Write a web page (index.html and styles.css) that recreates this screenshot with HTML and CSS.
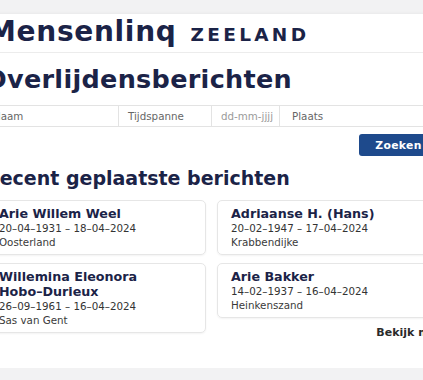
FILE: index.html
```html
<!DOCTYPE html>
<html>
	<head>
		<title>Mensenlinq Zeeland - Overlijdensberichten</title>
		<link rel="stylesheet" href="styles.css">
	</head>
	<body>
		<div class="page">
			<div class="header">
				<span class="logo">Mensenlinq</span>
				<span class="region">ZEELAND</span>
			</div>

			<h1>Overlijdensberichten</h1>

			<div class="searchRow">
				<div class="field nameField">Naam</div>
				<div class="field periodField">Tijdspanne</div>
				<div class="field dateField">dd-mm-jjjj</div>
				<div class="field placeField">Plaats</div>
			</div>
			<div class="buttonRow">
				<button class="searchButton">Zoeken</button>
			</div>

			<h2>Recent geplaatste berichten</h2>

			<div class="cards">
				<div class="column">
					<div class="card">
						<p class="name">Arie Willem Weel</p>
						<p class="dates">20–04–1931 – 18–04–2024</p>
						<p class="place">Oosterland</p>
					</div>
					<div class="card">
						<p class="name">Willemina Eleonora Hobo–Durieux</p>
						<p class="dates">26–09–1961 – 16–04–2024</p>
						<p class="place">Sas van Gent</p>
					</div>
				</div>
				<div class="column">
					<div class="card">
						<p class="name">Adriaanse H. (Hans)</p>
						<p class="dates">20–02–1947 – 17–04–2024</p>
						<p class="place">Krabbendijke</p>
					</div>
					<div class="card">
						<p class="name">Arie Bakker</p>
						<p class="dates">14–02–1937 – 16–04–2024</p>
						<p class="place">Heinkenszand</p>
					</div>
					<div class="moreRow">
						<a class="more">Bekijk meer</a>
					</div>
				</div>
			</div>
		</div>
	</body>
</html>
```

FILE: styles.css
```css
body {
	margin: 0;
	background-color: #f2f2f3;
	font-family: "DejaVu Sans", Verdana, sans-serif;
	color: #1b2347;
	overflow: hidden;
}

.page {
	background-color: #ffffff;
	margin: 14px 0 0 -30px;
	width: 453px;
	padding: 0 15px 28px 15px;
	box-shadow: 0 0 4px rgba(0, 0, 0, 0.06);
}

.header {
	display: flex;
	align-items: baseline;
	gap: 14px;
	height: 38px;
	padding-left: 3px;
	border-bottom: 1px solid #ececec;
	margin-right: -40px;
}

.logo {
	font-size: 28px;
	font-weight: 700;
	line-height: 35px;
	letter-spacing: 0.7px;
}

.region {
	font-size: 18.5px;
	font-weight: 700;
	letter-spacing: 3.3px;
}

h1 {
	font-size: 25.5px;
	font-weight: 700;
	margin: 11px 0 0 0;
	line-height: 30px;
	letter-spacing: 0.3px;
}

.searchRow {
	display: flex;
	margin-top: 11px;
	margin-right: -40px;
	border: 1px solid #e3e3e3;
	height: 20px;
}

.field {
	font-size: 10.3px;
	color: #666666;
	line-height: 20px;
	padding-left: 9px;
	border-right: 1px solid #e3e3e3;
	box-sizing: border-box;
}

.nameField { width: 133px; padding-left: 7px; }
.periodField { width: 93px; }
.dateField { width: 68px; color: #9a9a9a; }
.placeField { flex: 1; border-right: none; padding-left: 12px; }

.buttonRow {
	display: flex;
	justify-content: flex-end;
	margin-top: 7px;
}

.searchButton {
	background-color: #1e4a8c;
	color: #ffffff;
	border: none;
	border-radius: 3px;
	font-family: "DejaVu Sans", Verdana, sans-serif;
	font-weight: 700;
	font-size: 10.8px;
	letter-spacing: 0.3px;
	height: 22px;
	width: 79px;
	padding: 0;
}

h2 {
	font-size: 19px;
	font-weight: 700;
	margin: 10px 0 0 0;
	line-height: 24px;
}

.cards {
	display: flex;
	gap: 11px;
	margin-top: 10px;
}

.column {
	flex: 1;
	display: flex;
	flex-direction: column;
	gap: 8px;
}

.card {
	border: 1px solid #e6e6e6;
	border-radius: 5px;
	padding: 5px 10px 5px 13px;
	box-shadow: 0 1px 2px rgba(0, 0, 0, 0.05);
}

.card p {
	margin: 0;
}

.name {
	font-size: 12.7px;
	font-weight: 700;
	line-height: 15px;
	width: 160px;
}

.dates {
	font-size: 10.3px;
	color: #333333;
	line-height: 14px;
}

.place {
	font-size: 10.3px;
	color: #3a3a3a;
	line-height: 14px;
}

.moreRow {
	display: flex;
	justify-content: flex-end;
	margin-right: -12px;
}

.more {
	font-size: 11px;
	font-weight: 700;
	color: #2a2a2a;
	line-height: 14px;
}
```
